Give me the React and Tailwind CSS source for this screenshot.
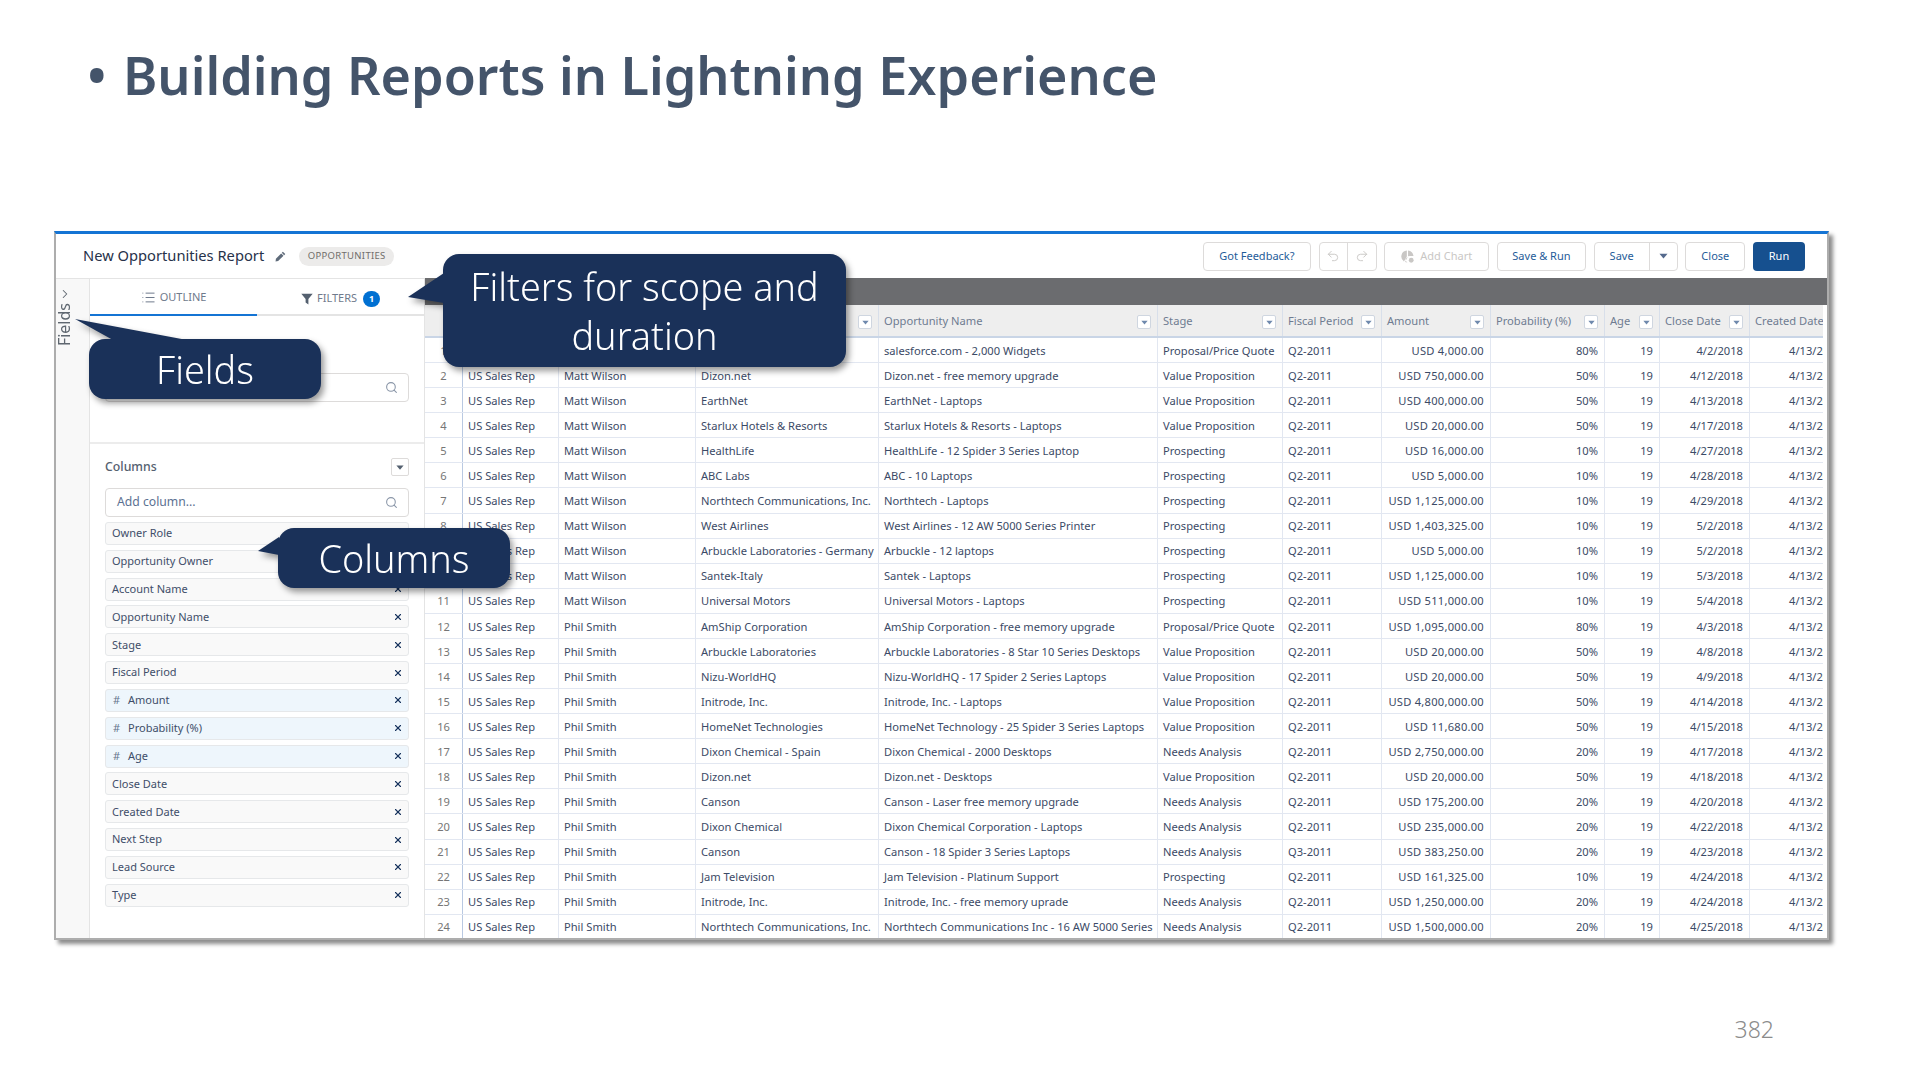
import React from "react";
import { Search, X, Undo2, Redo2, List, ChevronRight } from "lucide-react";

const rows = [
  ["1","US Sales Rep","Matt Wilson","salesforce.com","salesforce.com - 2,000 Widgets","Proposal/Price Quote","Q2-2011","USD 4,000.00","80%","4/2/2018"],
  ["2","US Sales Rep","Matt Wilson","Dizon.net","Dizon.net - free memory upgrade","Value Proposition","Q2-2011","USD 750,000.00","50%","4/12/2018"],
  ["3","US Sales Rep","Matt Wilson","EarthNet","EarthNet - Laptops","Value Proposition","Q2-2011","USD 400,000.00","50%","4/13/2018"],
  ["4","US Sales Rep","Matt Wilson","Starlux Hotels & Resorts","Starlux Hotels & Resorts - Laptops","Value Proposition","Q2-2011","USD 20,000.00","50%","4/17/2018"],
  ["5","US Sales Rep","Matt Wilson","HealthLife","HealthLife - 12 Spider 3 Series Laptop","Prospecting","Q2-2011","USD 16,000.00","10%","4/27/2018"],
  ["6","US Sales Rep","Matt Wilson","ABC Labs","ABC - 10 Laptops","Prospecting","Q2-2011","USD 5,000.00","10%","4/28/2018"],
  ["7","US Sales Rep","Matt Wilson","Northtech Communications, Inc.","Northtech - Laptops","Prospecting","Q2-2011","USD 1,125,000.00","10%","4/29/2018"],
  ["8","US Sales Rep","Matt Wilson","West Airlines","West Airlines - 12 AW 5000 Series Printer","Prospecting","Q2-2011","USD 1,403,325.00","10%","5/2/2018"],
  ["9","US Sales Rep","Matt Wilson","Arbuckle Laboratories - Germany","Arbuckle - 12 laptops","Prospecting","Q2-2011","USD 5,000.00","10%","5/2/2018"],
  ["10","US Sales Rep","Matt Wilson","Santek-Italy","Santek - Laptops","Prospecting","Q2-2011","USD 1,125,000.00","10%","5/3/2018"],
  ["11","US Sales Rep","Matt Wilson","Universal Motors","Universal Motors - Laptops","Prospecting","Q2-2011","USD 511,000.00","10%","5/4/2018"],
  ["12","US Sales Rep","Phil Smith","AmShip Corporation","AmShip Corporation - free memory upgrade","Proposal/Price Quote","Q2-2011","USD 1,095,000.00","80%","4/3/2018"],
  ["13","US Sales Rep","Phil Smith","Arbuckle Laboratories","Arbuckle Laboratories - 8 Star 10 Series Desktops","Value Proposition","Q2-2011","USD 20,000.00","50%","4/8/2018"],
  ["14","US Sales Rep","Phil Smith","Nizu-WorldHQ","Nizu-WorldHQ - 17 Spider 2 Series Laptops","Value Proposition","Q2-2011","USD 20,000.00","50%","4/9/2018"],
  ["15","US Sales Rep","Phil Smith","Initrode, Inc.","Initrode, Inc. - Laptops","Value Proposition","Q2-2011","USD 4,800,000.00","50%","4/14/2018"],
  ["16","US Sales Rep","Phil Smith","HomeNet Technologies","HomeNet Technology - 25 Spider 3 Series Laptops","Value Proposition","Q2-2011","USD 11,680.00","50%","4/15/2018"],
  ["17","US Sales Rep","Phil Smith","Dixon Chemical - Spain","Dixon Chemical - 2000 Desktops","Needs Analysis","Q2-2011","USD 2,750,000.00","20%","4/17/2018"],
  ["18","US Sales Rep","Phil Smith","Dizon.net","Dizon.net - Desktops","Value Proposition","Q2-2011","USD 20,000.00","50%","4/18/2018"],
  ["19","US Sales Rep","Phil Smith","Canson","Canson - Laser free memory upgrade","Needs Analysis","Q2-2011","USD 175,200.00","20%","4/20/2018"],
  ["20","US Sales Rep","Phil Smith","Dixon Chemical","Dixon Chemical Corporation - Laptops","Needs Analysis","Q2-2011","USD 235,000.00","20%","4/22/2018"],
  ["21","US Sales Rep","Phil Smith","Canson","Canson - 18 Spider 3 Series Laptops","Needs Analysis","Q3-2011","USD 383,250.00","20%","4/23/2018"],
  ["22","US Sales Rep","Phil Smith","Jam Television","Jam Television - Platinum Support","Prospecting","Q2-2011","USD 161,325.00","10%","4/24/2018"],
  ["23","US Sales Rep","Phil Smith","Initrode, Inc.","Initrode, Inc. - free memory uprade","Needs Analysis","Q2-2011","USD 1,250,000.00","20%","4/24/2018"],
  ["24","US Sales Rep","Phil Smith","Northtech Communications, Inc.","Northtech Communications Inc - 16 AW 5000 Series","Needs Analysis","Q2-2011","USD 1,500,000.00","20%","4/25/2018"],
];

const GRID = "grid grid-cols-[38px_96px_137px_183px_279px_125px_99px_109px_114px_55px_90px_98px] w-[1423px]";
const headers = ["", "", "", "", "Opportunity Name", "Stage", "Fiscal Period", "Amount", "Probability (%)", "Age", "Close Date", "Created Date"];
const fields = [
  ["Owner Role"],["Opportunity Owner"],["Account Name"],["Opportunity Name"],["Stage"],["Fiscal Period"],
  ["Amount",1],["Probability (%)",1],["Age",1],["Close Date"],["Created Date"],["Next Step"],["Lead Source"],["Type"],
];

function Caret({ className }) {
  return <svg viewBox="0 0 10 6" className={className}><path d="M0.5 0.5h9L5 5.7z" fill="currentColor" /></svg>;
}

function FilterBtn() {
  return (
    <span className="absolute right-[6px] top-[10px] w-[14px] h-[14px] bg-white border border-[#cfd6e0] rounded-[2px] flex items-center justify-center text-[#6f89ad]">
      <Caret className="w-[7px] h-[5px]" />
    </span>
  );
}

function Btn({ children, cls = "" }) {
  return <div className={`h-[29px] border border-[#dddbda] rounded-[4px] bg-white flex items-center justify-center text-[11px] text-[#1f5c99] ${cls}`}>{children}</div>;
}

function Callout({ pos, tail, children }) {
  return (
    <div className={`absolute bg-[#1a3159] rounded-[16px] text-white flex items-center justify-center text-center font-light text-[37.8px] leading-[49px] pt-[1px] drop-shadow-[3px_4px_3px_rgba(0,0,0,0.4)] ${pos}`}>
      {tail}
      {children}
    </div>
  );
}

export default function App() {
  return (
    <div className="relative w-[1920px] h-[1080px] bg-white overflow-hidden font-['Noto_Sans','Open_Sans',sans-serif]">
      <div className="h-[231px] pl-[87px] pt-[40px] flex items-start text-[#44546a] font-semibold text-[52.15px] leading-[70px]">
        <span className="w-[36px]">•</span>
        <span>Building Reports in Lightning Experience</span>
      </div>

      <div className="ml-[54px] w-[1775px] h-[709px] bg-white border-l-2 border-r-2 border-b-2 border-[#adadad] border-t-[3px] border-t-[#1474d4] shadow-[4px_4px_4px_rgba(0,0,0,0.45)] flex flex-col overflow-hidden">
        {/* Header */}
        <div className="h-[44px] shrink-0 flex items-center pl-[27px] pr-[22px]">
          <span className="text-[14.7px] text-[#27324a] -mt-[2px]">New Opportunities Report</span>
          <svg viewBox="0 0 12 12" className="w-[11px] h-[11px] ml-[11px] text-[#5f6b7a]"><path d="M8.6.8l2.6 2.6-1.2 1.2-2.6-2.6zM6.7 2.7l2.6 2.6L3.4 11 .6 11.4l.4-2.9z" fill="currentColor" /></svg>
          <span className="ml-[13px] h-[19px] w-[95px] bg-[#ecebea] rounded-full text-[9.5px] tracking-[0.3px] text-[#706e6b] flex items-center justify-center">OPPORTUNITIES</span>
          <div className="ml-auto flex items-center gap-[7.7px]">
            <Btn cls="w-[108px]">Got Feedback?</Btn>
            <div className="h-[29px] w-[58px] border border-[#dddbda] rounded-[4px] flex text-[#c9c7c5]">
              <span className="flex-1 flex items-center justify-center border-r border-[#dddbda]"><Undo2 size={14} strokeWidth={1.6} /></span>
              <span className="flex-1 flex items-center justify-center"><Redo2 size={14} strokeWidth={1.6} /></span>
            </div>
            <Btn cls="w-[105px] gap-[6px] !text-[#c9c7c5]">
              <svg viewBox="0 0 14 14" className="w-[13px] h-[13px]"><path d="M6.3 0.6A6.4 6.4 0 0 0 3.2 12.3L6.3 7zM7.6.6V6.4h5.8A6 6 0 0 0 7.6.6zM7.2 7.6h2.4a3.2 3.2 0 0 0-2.7 5.8A6 6 0 0 1 4.4 12.9z" fill="currentColor" /><circle cx="11" cy="11" r="2.6" fill="currentColor" /></svg>
              Add Chart
            </Btn>
            <Btn cls="w-[89px]">Save &amp; Run</Btn>
            <div className="h-[29px] w-[84px] border border-[#dddbda] rounded-[4px] flex text-[11px] text-[#1f5c99]">
              <span className="w-[55px] flex items-center justify-center border-r border-[#dddbda]">Save</span>
              <span className="flex-1 flex items-center justify-center text-[#54698d]"><Caret className="w-[9px] h-[6px]" /></span>
            </div>
            <Btn cls="w-[60px]">Close</Btn>
            <div className="h-[29px] w-[52px] bg-[#16508f] rounded-[4px] text-white text-[11px] flex items-center justify-center">Run</div>
          </div>
        </div>

        {/* Body */}
        <div className="flex-1 flex min-h-0">
          {/* Strip */}
          <div className="w-[34px] shrink-0 bg-[#f8f8f8] border-t border-r border-[#e4e4e4] flex flex-col items-start pl-[2px] pt-[8px] text-[#5f6770]">
            <ChevronRight size={14} strokeWidth={1.8} />
            <span className="mt-[2px] -ml-[2px] text-[16px] leading-none [writing-mode:vertical-rl] rotate-180">Fields</span>
          </div>
          {/* Panel */}
          <div className="w-[335px] shrink-0 border-r border-t border-[#e4e4e4] flex flex-col">
            <div className="h-[37px] shrink-0 grid grid-cols-2 border-b-2 border-[#e4e4e4] text-[11px] text-[#6f7a8c]">
              <div className="relative flex items-center justify-center gap-[4px] border-b-2 border-[#1474d4] h-[37px] pt-[2px]">
                <List size={15} strokeWidth={1.6} />
                OUTLINE
              </div>
              <div className="flex items-center justify-center gap-[4px] pt-[2px]">
                <svg viewBox="0 0 12 12" className="w-[12px] h-[12px] text-[#54606f]"><path d="M.3 .8h11.4L7.4 6v5.4L4.6 9.6V6z" fill="currentColor" /></svg>
                FILTERS
                <span className="ml-[2px] w-[17px] h-[16px] rounded-full bg-[#0070d2] text-white text-[9px] font-bold flex items-center justify-center">1</span>
              </div>
            </div>
            <div className="h-[128px] shrink-0 border-b-2 border-[#ececec] px-[15px] pt-[57px]">
              <div className="h-[29px] border border-[#dddbda] rounded-[4px] flex items-center justify-end pr-[10px] text-[#8a96a8]"><Search size={13} /></div>
            </div>
            <div className="px-[15px] pt-[14px]">
              <div className="flex items-center justify-between h-[18px]">
                <span className="text-[12.3px] font-medium text-[#54606f]">Columns</span>
                <span className="w-[18px] h-[18px] border border-[#dddbda] rounded-[2px] flex items-center justify-center text-[#54606f]"><Caret className="w-[8px] h-[5px]" /></span>
              </div>
              <div className="mt-[12px] h-[29px] border border-[#dddbda] rounded-[4px] flex items-center justify-between pl-[11px] pr-[10px] pb-[1px] text-[12.2px] text-[#5b7192]">
                Add column...
                <Search size={13} className="text-[#8a96a8]" />
              </div>
              <div className="mt-[5px] flex flex-col gap-[4.83px]">
                {fields.map(([name, num]) => (
                  <div key={name} className={`h-[23px] border border-[#e6e8ea] rounded-[3px] flex items-center pl-[6px] pr-[5px] text-[11px] text-[#3f4e69] ${num ? "bg-[#eef6fc]" : "bg-[#f9f9f9]"}`}>
                    {num ? <span className="w-[16px] pl-[1px] text-[#66758c]">#</span> : null}
                    <span>{name}</span>
                    <X size={10} strokeWidth={2.6} className="ml-auto text-[#16325c]" />
                  </div>
                ))}
              </div>
            </div>
          </div>
          {/* Table */}
          <div className="flex-1 min-w-0 flex flex-col">
            <div className="h-[27px] shrink-0 bg-[#6b6c6f]" />
            <div className="w-[1398px] overflow-hidden flex-1 text-[11.15px] text-[#3b4a66]">
              <div className={`${GRID} h-[33px] bg-[#eeeeee] border-b-2 border-[#c9d5e6] text-[#6f7c91]`}>
                {headers.map((h, i) => (
                  <div key={i} className="relative flex items-center pl-[5px] pt-[2px] border-r border-[#d8dfea] overflow-hidden whitespace-nowrap">
                    {h}
                    {i > 0 && i < 11 && <FilterBtn />}
                  </div>
                ))}
              </div>
              {rows.map((r) => (
                <div key={r[0]} className={`${GRID} h-[25.08px] border-b border-[#e2e7f1]`}>
                  <div className="flex items-center justify-center pt-[2px] text-[#767676] border-r border-[#b9c9e2]">{r[0]}</div>
                  {r.slice(1, 7).map((c, i) => (
                    <div key={i} className="flex items-center pl-[5px] pt-[2px] border-r border-[#e2e7f1] overflow-hidden whitespace-nowrap">{c}</div>
                  ))}
                  <div className="flex items-center justify-end pt-[2px] pr-[6px] tracking-[0.25px] border-r border-[#e2e7f1]">{r[7]}</div>
                  <div className="flex items-center justify-end pt-[2px] pr-[6px] border-r border-[#e2e7f1]">{r[8]}</div>
                  <div className="flex items-center justify-end pt-[2px] pr-[6px] border-r border-[#e2e7f1]">19</div>
                  <div className="flex items-center justify-end pt-[2px] pr-[6px] border-r border-[#e2e7f1]">{r[9]}</div>
                  <div className="flex items-center justify-end pt-[2px] pr-[6px]">4/13/2018</div>
                </div>
              ))}
            </div>
          </div>
        </div>
      </div>

      <div className="pt-[73px] pr-[146px] text-right text-[23px] leading-[32px] font-light text-[#8b8b8b]">382</div>

      {/* Callouts */}
      <Callout
        pos="left-[443px] top-[254px] w-[403px] h-[113px]"
        tail={<svg className="absolute left-[-35px] top-[19px] w-[36px] h-[30px] text-[#1a3159]" viewBox="0 0 36 30"><path d="M36 0L0 24l36 6z" fill="currentColor" /></svg>}
      >
        <span>Filters for scope and<br />duration</span>
      </Callout>
      <Callout
        pos="left-[89px] top-[339px] w-[232px] h-[60px]"
        tail={<svg className="absolute left-[-14px] top-[-20px] w-[112px] h-[21px] text-[#1a3159]" viewBox="0 0 112 21"><path d="M0 0L38 21H112z" fill="currentColor" /></svg>}
      >
        Fields
      </Callout>
      <Callout
        pos="left-[278px] top-[528px] w-[232px] h-[60px]"
        tail={<svg className="absolute left-[-20px] top-[9px] w-[21px] h-[18px] text-[#1a3159]" viewBox="0 0 21 18"><path d="M21 0L0 14l21 4z" fill="currentColor" /></svg>}
      >
        Columns
      </Callout>
    </div>
  );
}
